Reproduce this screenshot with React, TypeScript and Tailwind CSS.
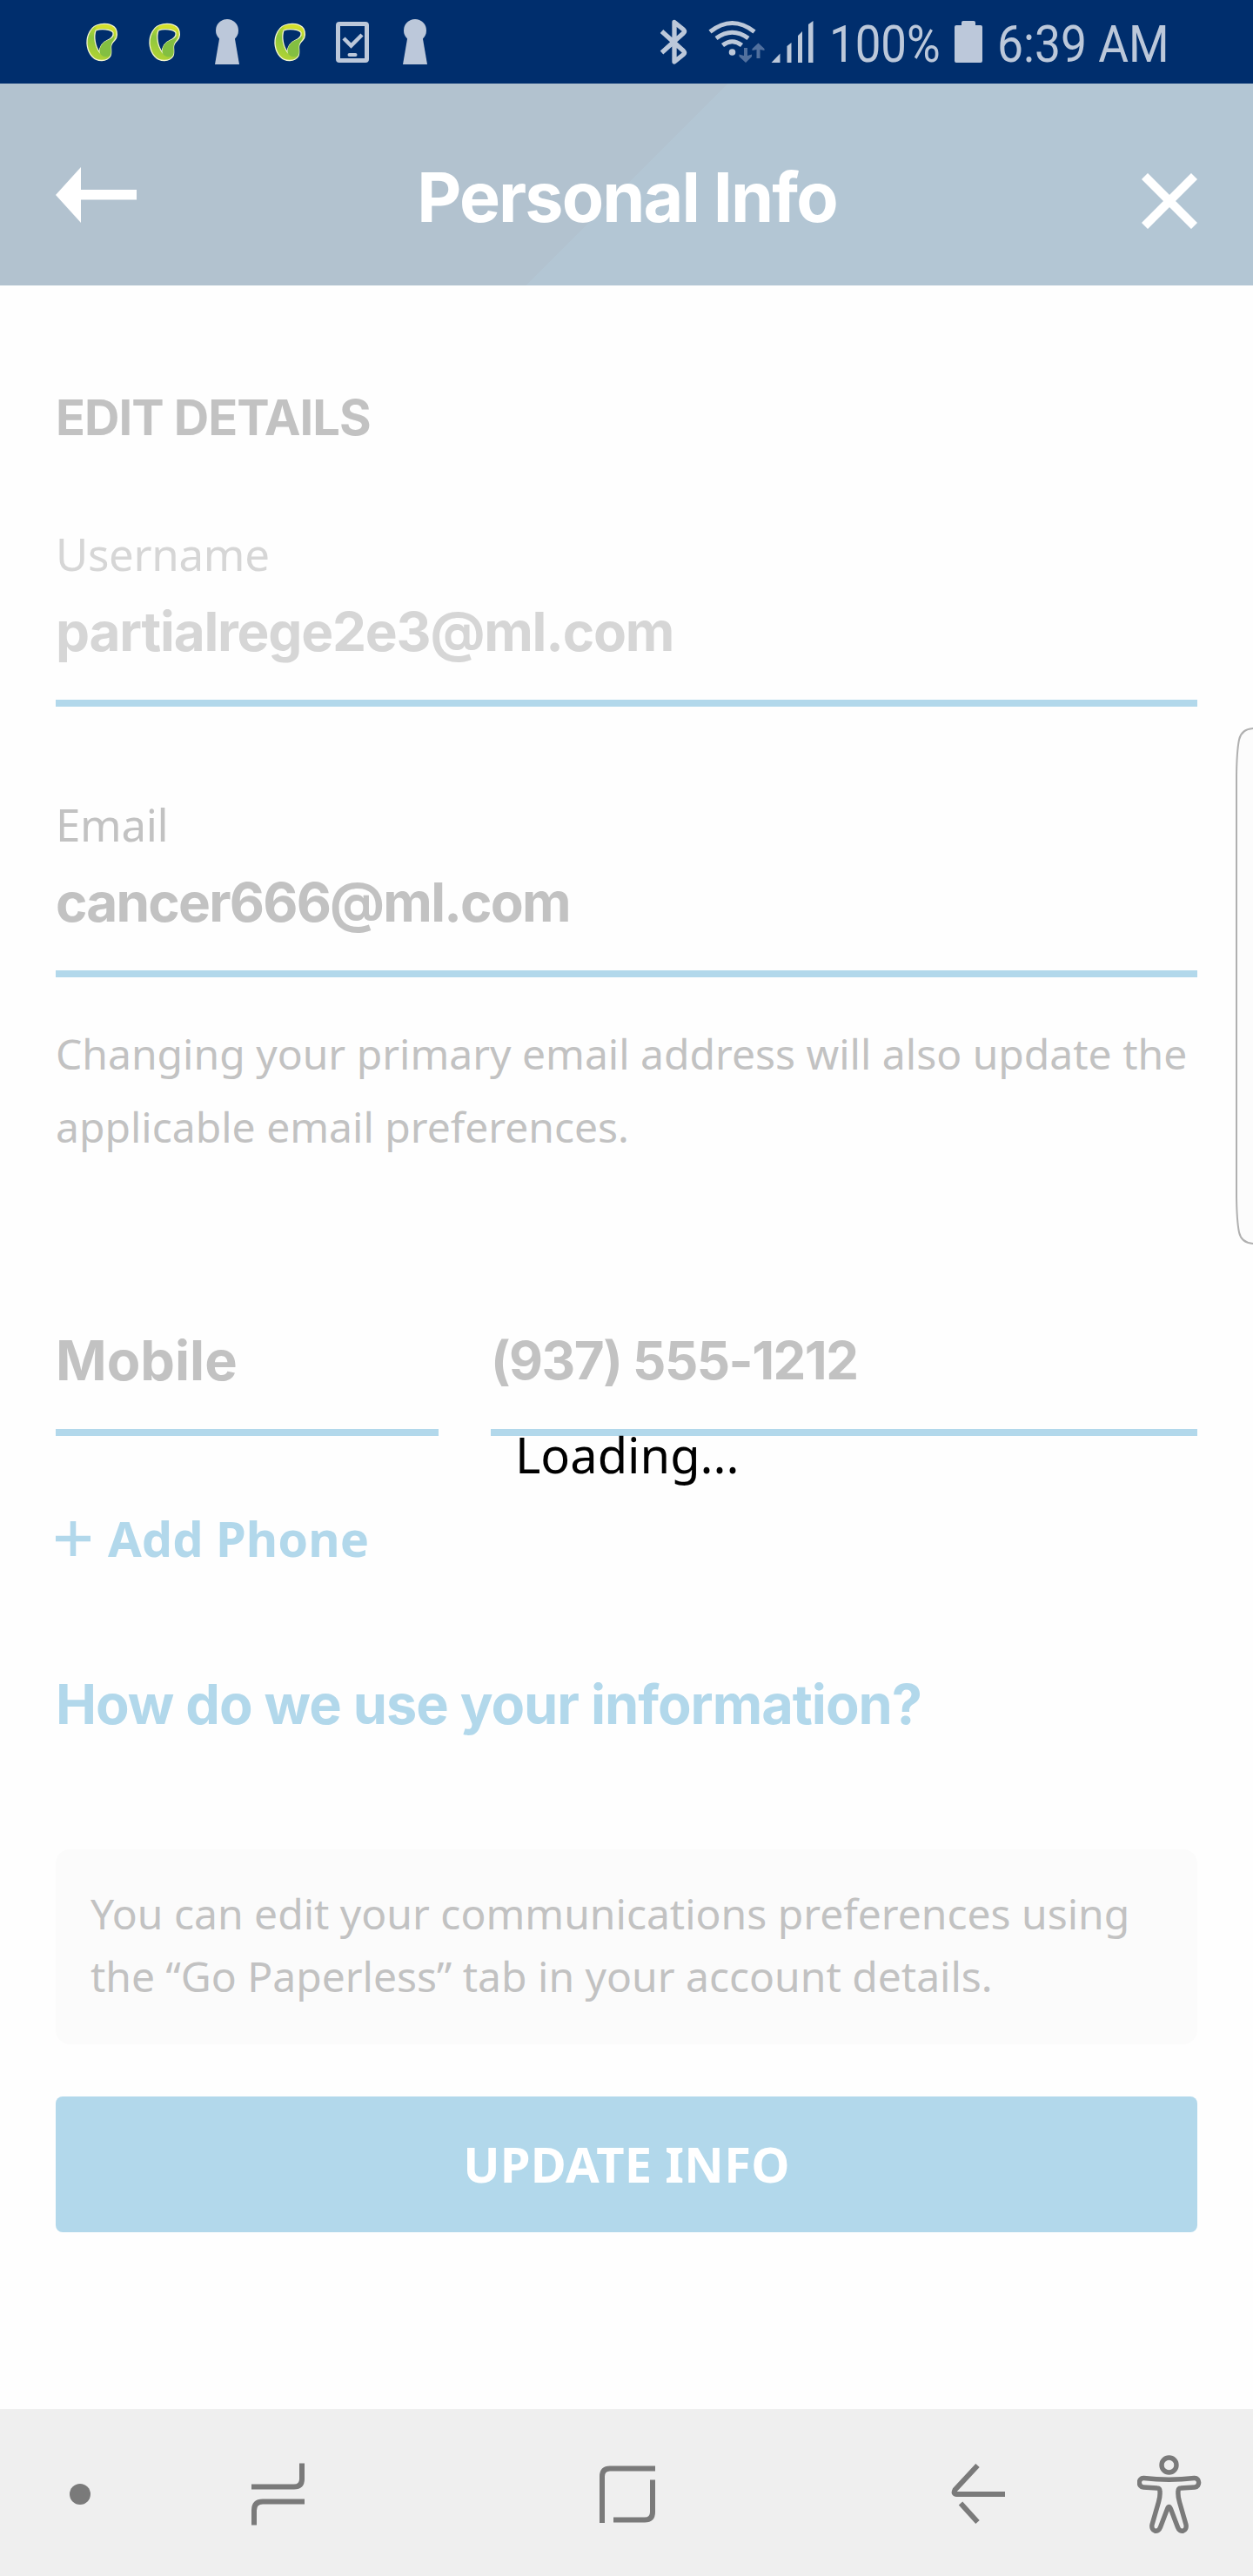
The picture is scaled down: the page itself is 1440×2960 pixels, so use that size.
import type { ReactNode } from "react";

const STATUS = "#bcc8da";
const NAV = "#7a7a7a";

function SwirlIcon({ id }: { id: string }) {
  return (
    <svg width="50" height="60" viewBox="0 0 50 60" fill="none">
      <defs>
        <linearGradient id={id} x1="34" y1="10" x2="16" y2="50" gradientUnits="userSpaceOnUse">
          <stop offset="0" stopColor="#d9e32b" />
          <stop offset="0.5" stopColor="#8cc63f" />
          <stop offset="1" stopColor="#b4d433" />
        </linearGradient>
      </defs>
      <path
        fillRule="evenodd"
        d="M19 11C27 8 37 9 41 15C43 19 43 25 40 28C37 31 35.500 33 35.500 36C35.500 40 36.500 44 34.500 47C31 52.500 20 53.500 14 47C8 40.500 6.500 30 9.500 22C11.500 17 14.500 12.500 19 11ZM18 17C15.500 24 17 35 22.500 42C22 36 26 30.500 31 28.500C35 27 39 25 38 19.500C36 15.500 24 14.500 18 17Z"
        fill={`url(#${id})`}
        stroke="#f4f6d0"
        strokeWidth="1.300"
      />
      <path d="M22.500 42C22 36 26 30.500 31 28.500C35 27 37.500 26 38.500 23C40.500 28 35.500 30 35.500 36C35.500 40 36.500 44 34 46.500C29 48.500 24 46.500 22.500 42Z" fill="#83bf41" />
      <path d="M18.500 12C27 9 36 10 39.500 15.500C34 13.500 25 13.500 18.500 16Z" fill="#d3df2c" />
    </svg>
  );
}

function KeyholeIcon() {
  return (
    <svg width="28" height="52" viewBox="0 0 28 52" fill={STATUS}>
      <circle cx="14" cy="13" r="13" />
      <path d="M5.500 20H22.500L28 52H0Z" />
    </svg>
  );
}

function TabletIcon() {
  return (
    <svg width="38" height="47" viewBox="0 0 38 47" fill="none" stroke={STATUS}>
      <rect x="2.500" y="2.500" width="33" height="42" rx="1.500" strokeWidth="5" />
      <path d="M9 19L17.500 27.500L30 15" strokeWidth="4.500" />
      <path d="M15.500 38H22.500" strokeWidth="4" strokeLinecap="round" />
    </svg>
  );
}

function Slot({ children }: { children: ReactNode }) {
  return <div className="flex w-[72px] items-center justify-center">{children}</div>;
}

function StatusBar() {
  return (
    <div className="flex h-24 items-center bg-[#002e6d] pl-[81px] text-[#bcc8da]">
      <Slot><SwirlIcon id="swirl-a" /></Slot>
      <Slot><SwirlIcon id="swirl-b" /></Slot>
      <Slot><KeyholeIcon /></Slot>
      <Slot><SwirlIcon id="swirl-c" /></Slot>
      <Slot><TabletIcon /></Slot>
      <Slot><KeyholeIcon /></Slot>

      <svg className="ml-[245px]" width="32" height="96" viewBox="0 0 32 96" fill="none" stroke={STATUS} strokeWidth="5.300" strokeLinejoin="round">
        <path d="M2.500 36L27.500 58.500Q29.500 60.500 27.500 62.500L17 71V25.500L27.500 34Q29.500 36 27.500 38L2.500 60.500" />
      </svg>
      <svg className="ml-6" width="66" height="96" viewBox="0 0 66 96" fill="none" stroke={STATUS}>
        <path d="M2 36.500Q27.500 16.500 53 36.500" strokeWidth="5" />
        <path d="M9 44Q27.500 30.500 46 44" strokeWidth="5" />
        <path d="M16.500 52Q27.500 43.500 38.500 52" strokeWidth="5" />
        <circle cx="27.500" cy="60" r="3.800" fill={STATUS} stroke="none" />
        <g fill="#51709e" stroke="none">
          <path d="M41 55H45V64L50 62.500V65L43 72L35.500 65V62.500L41 64Z" />
          <path d="M55.500 67H59.500V57L64.500 58V56L57.500 49.500L50.500 56V58L55.500 57Z" />
        </g>
      </svg>
      <svg className="ml-[6px]" width="50" height="96" viewBox="0 0 50 96" fill={STATUS}>
        <path d="M0.500 72L10.500 61.500V72ZM18.500 53L23.500 49V72H18.500ZM31 41L36 36V72H31ZM43 28L48.500 24V72H43Z" />
      </svg>
      <span className="ml-[17px] w-[145px] origin-left scale-x-[0.88] pt-[5px] font-[Roboto] text-[60px] leading-[90px] whitespace-nowrap">100%</span>
      <svg className="-ml-px" width="32" height="96" viewBox="0 0 32 96" fill={STATUS}>
        <path d="M8 29V26Q8 24 10 24H22Q24 24 24 26V29H30Q32 29 32 31V70Q32 72 30 72H2Q0 72 0 70V31Q0 29 2 29Z" />
      </svg>
      <span className="ml-[17px] origin-left scale-x-[0.89] pt-[5px] font-[Roboto] text-[60px] leading-[90px] whitespace-nowrap">6:39 AM</span>
    </div>
  );
}

function Header() {
  return (
    <header className="flex h-[232px] items-start bg-[linear-gradient(135deg,#b2c2cf_0_50%,#b3c6d4_50%)] px-16">
      <svg className="mt-24" width="93" height="64" viewBox="0 0 93 64" fill="#fff">
        <path d="M29 0V26H93V37.500H29V64L0 32Z" />
      </svg>
      <h1 className="mt-[90px] flex-1 pr-[28px] text-center font-[Inter] text-[79px] leading-[80px] font-bold tracking-[-1.9px] text-white">
        Personal Info
      </h1>
      <svg className="mt-[103px]" width="64" height="64" viewBox="0 0 64 64" stroke="#fff" strokeWidth="10">
        <path d="M3.500 3.500L60.500 60.500M60.500 3.500L3.500 60.500" />
      </svg>
    </header>
  );
}

const VALUE = "border-b-8 border-[#b2d8eb] font-[Inter] leading-[80px] font-bold";

function Main() {
  return (
    <main className="relative h-[2440px] bg-[#fefefe] px-16 pt-[122px] font-['Noto_Sans'] text-[#c2c2c2]">
      <h2 className="font-[Inter] text-[56px] leading-[60px] font-bold tracking-[-1px]">EDIT DETAILS</h2>

      <div className="mt-24 text-[#d6d6d6]">
        <div className="text-[51px] leading-[60px] tracking-[-0.3px]">Username</div>
        <div className={`${VALUE} mt-5 pb-[38px] text-[62px] tracking-[-1.2px]`}>partialrege2e3@ml.com</div>
      </div>

      <div className="mt-[105px]">
        <div className="text-[51px] leading-[60px] tracking-[-0.3px]">Email</div>
        <div className={`${VALUE} mt-5 pb-[38px] text-[62px] tracking-[-1.78px]`}>cancer666@ml.com</div>
      </div>
      <p className="mt-[46px] text-[48px] leading-[84px]">
        Changing your primary email address will also update the
        <br />
        applicable email preferences.
      </p>

      <div className="mt-[186px] flex gap-[60px]">
        <div className={`${VALUE} w-[440px] pb-[39px] text-[63px]`}>Mobile</div>
        <div className={`${VALUE} flex-1 pb-[39px] text-[60px] tracking-[-1.5px]`}>(937) 555-1212</div>
      </div>

      <div className="mt-[87px] flex text-[56px] leading-[60px] font-bold text-[#b2d8eb]">
        <svg className="mt-[11px] mr-5" width="40" height="40" viewBox="0 0 40 40" stroke="#b2d8eb" strokeWidth="6.500">
          <path d="M20 0V40M0 20H40" />
        </svg>
        Add Phone
      </div>
      <div className="mt-[121px] font-[Inter] text-[63px] leading-[80px] font-bold tracking-[-1px] text-[#b2d8eb]">
        How do we use your information?
      </div>

      <p className="mt-[127px] h-56 rounded-2xl bg-[#fbfbfb] px-10 pt-[38px] text-[48px] leading-[72px]">
        You can edit your communications preferences using
        <br />
        the “Go Paperless” tab in your account details.
      </p>
      <button className="mt-[60px] block h-[156px] w-full rounded-lg bg-[#b2d8eb] pb-[3px] text-[56px] leading-[60px] font-bold tracking-[0.3px] text-white">
        UPDATE INFO
      </button>

      <div className="absolute top-[1313px] left-[592px] text-[56px] leading-[60px] text-black">Loading...</div>
      <svg className="absolute top-[508px] right-0" width="20" height="594" viewBox="0 0 20 594" fill="#fcfcfc" stroke="#b0b0b0" strokeWidth="2">
        <path d="M22 1C12 1 6 5 4 14C2 24 1.200 36 1 56V538C1.200 558 2 570 4 580C6 589 12 593 22 593" />
      </svg>
    </main>
  );
}

function NavBar() {
  return (
    <nav className="flex h-48 items-center bg-[#efefef] pt-1">
      <div className="ml-20 size-6 rounded-full bg-[#7a7a7a]" />
      <svg className="ml-[185px]" width="61" height="72" viewBox="0 0 61 72" fill="none" stroke={NAV} strokeWidth="6">
        <path d="M0 27.500H49Q58 27.500 58 18.500V0.500M61 44.500H13Q3 44.500 3 54.500V71.500" />
      </svg>
      <svg className="ml-[339px]" width="64" height="66" viewBox="0 0 64 66" fill="none" stroke={NAV} strokeWidth="6">
        <path d="M64 3.500H12Q3 3.500 3 12.500V66M16 62.500H52Q61 62.500 61 53.500V16.500" />
      </svg>
      <svg className="ml-[340px]" width="62" height="70" viewBox="0 0 62 70" fill="none" stroke={NAV} strokeWidth="6">
        <path d="M30.500 2L4.500 30Q2 35 6.500 35H62M11 45.500L30.500 67" />
      </svg>
      <svg className="ml-[152px]" width="74" height="90" viewBox="0 0 74 90" fill="none" stroke={NAV} strokeWidth="5.400" strokeLinejoin="round">
        <circle cx="36.500" cy="11.500" r="8.500" />
        <path d="M7.500 26.500Q36.500 30 65.500 26.500C72 26 72.500 36.500 66 37L50 38Q47 38 47 42Q46.500 47 48.500 54L56 80C57.500 88 49 90 46.500 83L38.500 62Q36.500 57 34.500 62L26.500 83C24 90 15.500 88 17 80L24.500 54Q26.500 47 26 42Q26 38 23 38L7 37C0.500 36.500 1 26 7.500 26.500Z" />
      </svg>
    </nav>
  );
}

export default function App() {
  return (
    <div className="w-[1440px] overflow-hidden">
      <StatusBar />
      <Header />
      <Main />
      <NavBar />
    </div>
  );
}
